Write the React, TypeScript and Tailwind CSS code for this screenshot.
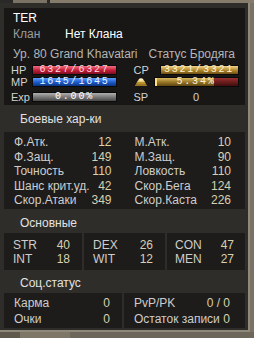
import React from 'react'

type Stat = { label: string; value: string };

const combatLeft: Stat[] = [
  { label: 'Ф.Атк.', value: '12' },
  { label: 'Ф.Защ.', value: '149' },
  { label: 'Точность', value: '110' },
  { label: 'Шанс крит.уд.', value: '42' },
  { label: 'Скор.Атаки', value: '349' },
];

const combatRight: Stat[] = [
  { label: 'М.Атк.', value: '10' },
  { label: 'М.Защ.', value: '90' },
  { label: 'Ловкость', value: '110' },
  { label: 'Скор.Бега', value: '124' },
  { label: 'Скор.Каста', value: '226' },
];

const Row = ({ s, h }: { s: Stat; h: string }) => (
  <div className={`${h} flex justify-between whitespace-nowrap`}>
    <span className="text-[#cdcdcd]">{s.label}</span>
    <span className="text-[#d9d0b0]">{s.value}</span>
  </div>
);

type BarProps = { text: string; width: string; fill: string; color: string };

const Bar = ({ text, width, fill, color }: BarProps) => (
  <div className={`${width} h-[10px] ${fill} border border-[#0a0a0a] flex items-center justify-center`}>
    <span className={`font-['Liberation_Mono',monospace] text-[10px] leading-[8px] tracking-[1.8px] ${color}`}>{text}</span>
  </div>
);

const GoldIcon = () => (
  <svg width="14" height="10" viewBox="0 0 14 10">
    <path d="M1 9 L3 5 L5 4 L9 4 L11 5 L13 9 Z" fill="#b8902e" />
    <path d="M3 5 L5 2 L9 2 L11 5 Z" fill="#e8cc78" />
    <ellipse cx="7" cy="2.5" rx="2" ry="1.3" fill="#fff2c8" />
    <path d="M2 8 L12 8" stroke="#7a5a18" strokeWidth="1" />
  </svg>
);

export default function App() {
  return (
    <div className="w-[254px] h-[338px] bg-[#6d675b] flex flex-col overflow-hidden font-['Liberation_Sans',sans-serif] text-[12px]">
      {/* top texture */}
      <div className="h-[3px] flex shrink-0">
        <div className="w-[13px] bg-[#2a2927]" />
        <div className="w-[34px] bg-[#7a7264]" />
        <div className="w-[3px] bg-[#2a2927]" />
        <div className="flex-1 bg-[#857c6b]" />
      </div>

      <div className="flex shrink-0">
        <div className="w-[250px] h-[329px] bg-[#2e2d2a] border-r-2 border-b-2 border-[#8f897c] flex flex-col pl-[4px] pr-[3px] pt-[5px]">
          {/* character panel */}
          <div className="h-[97px] bg-[#181716] pt-[2px] pb-[3px] flex flex-col">
            <div className="h-[16px] leading-[16px] pl-[9px] text-white">TER</div>
            <div className="h-[16px] leading-[16px] pl-[9px] flex">
              <span className="w-[52px] text-[#9c9c9c]">Клан</span>
              <span className="text-white">Нет Клана</span>
            </div>
            <div className="mt-[4px] h-[17px] leading-[17px] grid grid-cols-2 text-[#b5b5b5] whitespace-nowrap">
              <span className="pl-[9px]">Ур. 80 Grand Khavatari</span>
              <span className="pl-[24px]">Статус Бродяга</span>
            </div>

            <div className="mt-[2px] h-[10px] grid grid-cols-2 items-center text-[11px] leading-[10px]">
              <div className="flex items-center">
                <span className="w-[28px] pl-[7px] text-[#d2d2d2]">HP</span>
                <Bar text="6327/6327" width="w-[85px]" fill="bg-linear-to-b from-[#f06a80] via-[#c81e3c] to-[#7e0e20]" color="text-[#ffd8dc]" />
              </div>
              <div className="flex items-center pl-[9px]">
                <span className="w-[26px] text-[#d2d2d2]">CP</span>
                <Bar text="3321/3321" width="w-[79px]" fill="bg-linear-to-b from-[#f0d488] via-[#b48c30] to-[#6e5014]" color="text-[#fff2d0]" />
              </div>
            </div>

            <div className="mt-[2px] h-[10px] grid grid-cols-2 items-center text-[11px] leading-[10px]">
              <div className="flex items-center">
                <span className="w-[28px] pl-[7px] text-[#d2d2d2]">MP</span>
                <Bar text="1645/1645" width="w-[85px]" fill="bg-linear-to-b from-[#5c9cff] via-[#1e5ed0] to-[#0c347e]" color="text-[#e8f2ff]" />
              </div>
              <div className="flex items-center pl-[9px]">
                <span className="w-[20px] flex items-center"><GoldIcon /></span>
                <div className="w-[85px] h-[10px] border border-[#0a0a0a] flex relative">
                  <div className="w-[72%] bg-linear-to-b from-[#d8b860] via-[#9a7828] to-[#5e4612] border-l-2 border-[#ffe080]" />
                  <div className="flex-1 bg-linear-to-b from-[#9a3030] via-[#6e1c1c] to-[#3e0e0e]" />
                  <span className="absolute inset-0 flex items-center justify-center font-['Liberation_Mono',monospace] text-[10px] leading-[8px] tracking-[1.8px] text-[#fff4d8]">5.34%</span>
                </div>
              </div>
            </div>

            <div className="mt-[5px] h-[10px] grid grid-cols-2 items-center text-[11px] leading-[10px]">
              <div className="flex items-center">
                <span className="w-[28px] pl-[7px] text-[#d2d2d2]">Exp</span>
                <Bar text="0.00%" width="w-[85px]" fill="bg-linear-to-b from-[#b0b0b0] via-[#7a7a7a] to-[#474747]" color="text-[#ffffff]" />
              </div>
              <div className="flex items-center pl-[9px]">
                <span className="w-[20px] text-[#d2d2d2]">SP</span>
                <span className="w-[85px] text-center text-[#d2d2d2]">0</span>
              </div>
            </div>
          </div>

          {/* combat */}
          <div className="h-[27px] pt-[7px] leading-[14px] pl-[16px] text-[#e2e2e2]">Боевые хар-ки</div>
          <div className="h-[77px] bg-[#1d1c1a] pt-[3px] grid grid-cols-2">
            <div className="pl-[10px] pr-[13px] leading-[14.5px]">
              {combatLeft.map((s) => <Row key={s.label} s={s} h="h-[14.5px]" />)}
            </div>
            <div className="pl-[10px] pr-[14px] leading-[14.5px]">
              {combatRight.map((s) => <Row key={s.label} s={s} h="h-[14.5px]" />)}
            </div>
          </div>

          {/* base stats */}
          <div className="h-[24px] pt-[7px] leading-[14px] pl-[16px] text-[#e2e2e2]">Основные</div>
          <div className="h-[37px] flex gap-[2px] leading-[14px]">
            <div className="w-[78px] bg-[#1d1c1a] pt-[5px] pl-[9px] pr-[12px]">
              <Row s={{ label: 'STR', value: '40' }} h="h-[14px]" />
              <Row s={{ label: 'INT', value: '18' }} h="h-[14px]" />
            </div>
            <div className="w-[81px] bg-[#1d1c1a] pt-[5px] pl-[9px] pr-[12px]">
              <Row s={{ label: 'DEX', value: '26' }} h="h-[14px]" />
              <Row s={{ label: 'WIT', value: '12' }} h="h-[14px]" />
            </div>
            <div className="flex-1 bg-[#1d1c1a] pt-[5px] pl-[8px] pr-[11px]">
              <Row s={{ label: 'CON', value: '47' }} h="h-[14px]" />
              <Row s={{ label: 'MEN', value: '27' }} h="h-[14px]" />
            </div>
          </div>

          {/* social */}
          <div className="h-[23px] pt-[6px] leading-[14px] pl-[16px] text-[#e2e2e2]">Соц.статус</div>
          <div className="h-[35px] flex gap-[2px] leading-[16px]">
            <div className="w-[118px] bg-[#1d1c1a] pt-[2px] pl-[10px] pr-[12px]">
              <Row s={{ label: 'Карма', value: '0' }} h="h-[16px]" />
              <Row s={{ label: 'Очки', value: '0' }} h="h-[16px]" />
            </div>
            <div className="flex-1 bg-[#1d1c1a] pt-[2px] pl-[10px] pr-[15px]">
              <Row s={{ label: 'PvP/PK', value: '0 / 0' }} h="h-[16px]" />
              <Row s={{ label: 'Остаток записи', value: '0' }} h="h-[16px]" />
            </div>
          </div>
        </div>
        <div className="flex-1 bg-[#7a7264]" />
      </div>

      {/* bottom texture */}
      <div className="flex-1 flex">
        <div className="w-[20px] bg-[#5e584d]" />
        <div className="w-[50px] bg-[#7e7666]" />
        <div className="flex-1 bg-[#6d675b]" />
      </div>
    </div>
  );
}
